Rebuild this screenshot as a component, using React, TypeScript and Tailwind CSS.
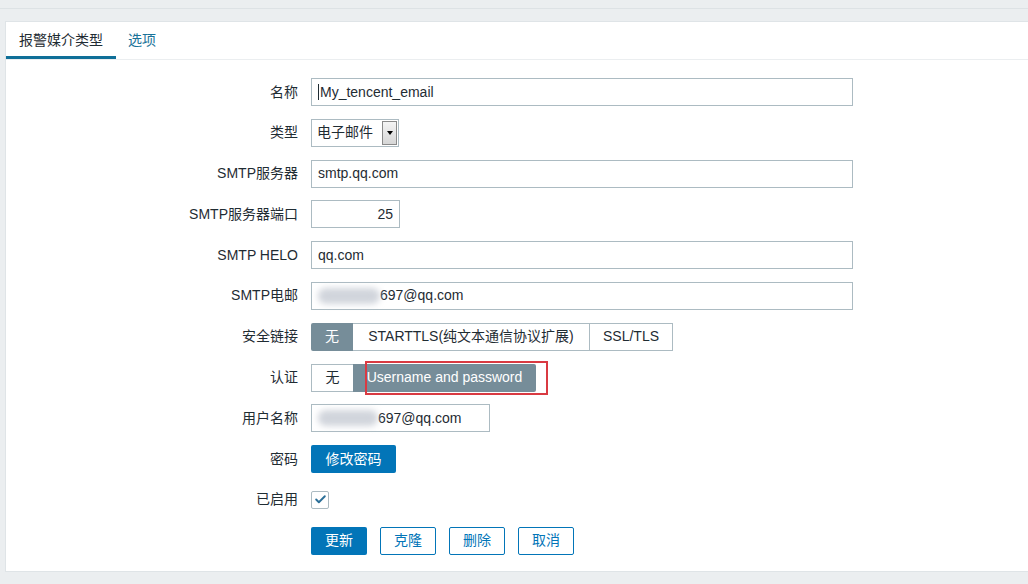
import { Check } from "lucide-react";

const font = { fontFamily: '"Liberation Sans", Arial, "Noto Sans CJK SC", sans-serif' };

function Blur({ w }: { w: string }) {
  return <span className={`inline-block h-4 ${w} rounded-full bg-gray-300 blur-[3px]`} />;
}

const Label = ({ children }: { children: React.ReactNode }) => (
  <div className="flex h-7 items-center justify-end text-[14px] text-[#1f2c33]">{children}</div>
);

const inputCls = "flex h-7 items-center border border-[#acbbc2] bg-white px-[6px] text-[14px] text-[#1f2c33]";

export default function App() {
  return (
    <div className="min-h-screen bg-[#ebeef0]" style={font}>
      <div className="h-[9px] border-b border-[#dde2e5]" />
      <div className="ml-[5px] mt-[12px] h-[551px] border border-r-0 border-[#dfe4e7] bg-white">
        <div className="flex h-[38px] border-b border-[#ebeef0]">
          <div className="flex w-[110px] items-center justify-center border-b-[3px] border-[#0f6f98] pt-[3px] text-[14px] text-[#1f2c33]">
            报警媒介类型
          </div>
          <div className="ml-[12px] flex items-center text-[14px] text-[#1a7399]">选项</div>
        </div>

        <div className="mt-[18px] grid grid-cols-[292px_1fr] gap-x-[13px] gap-y-[12.8px]">
          <Label>名称</Label>
          <div className={`${inputCls} w-[542px] border-[#2f545c] bg-[#fafeff]`}>
            <span className="mr-px h-4 w-px bg-[#1f2c33]" />My_tencent_email
          </div>

          <Label>类型</Label>
          <div className="flex h-7 w-[88px] items-center justify-between border border-[#acbbc2] bg-white pl-[5px] pr-px text-[14px] text-[#1f2c33]">
            电子邮件
            <span className="flex h-[24px] w-[15px] items-center justify-center border border-[#8a8a8a] bg-gradient-to-b from-[#f4f4f4] to-[#d6d6d6]">
              <span className="h-0 w-0 border-x-[3.5px] border-t-[4px] border-x-transparent border-t-black" />
            </span>
          </div>

          <Label>SMTP服务器</Label>
          <div className={`${inputCls} w-[542px]`}>smtp.qq.com</div>

          <Label>SMTP服务器端口</Label>
          <div className={`${inputCls} w-[89px] justify-end`}>25</div>

          <Label>SMTP HELO</Label>
          <div className={`${inputCls} w-[542px]`}>qq.com</div>

          <Label>SMTP电邮</Label>
          <div className={`${inputCls} w-[542px]`}>
            <Blur w="w-[62px]" />697@qq.com
          </div>

          <Label>安全链接</Label>
          <div className="flex h-7 text-[14px]">
            <div className="flex w-[42px] items-center justify-center rounded-l-[2px] bg-[#768d99] text-white">无</div>
            <div className="flex w-[237px] items-center justify-center border border-l-0 border-[#acbbc2] text-[#1f2c33]">
              STARTTLS(纯文本通信协议扩展)
            </div>
            <div className="flex w-[83px] items-center justify-center border border-l-0 border-[#acbbc2] text-[#1f2c33]">
              SSL/TLS
            </div>
          </div>

          <Label>认证</Label>
          <div className="flex h-7 text-[14px]">
            <div className="flex w-[42px] items-center justify-center border border-r-0 border-[#acbbc2] text-[#1f2c33]">无</div>
            <div className="relative flex w-[183px] items-center justify-center rounded-r-[2px] bg-[#768d99] text-white">
              Username and password
              <span className="absolute -bottom-[3px] -right-[12px] -top-[3px] left-[12px] border-2 border-[#d93a42]" />
            </div>
          </div>

          <Label>用户名称</Label>
          <div className={`${inputCls} w-[179px]`}>
            <Blur w="w-[60px]" />697@qq.com
          </div>

          <Label>密码</Label>
          <button className="flex h-7 w-[85px] items-center justify-center rounded-[2px] bg-[#0275b8] text-[14px] text-white">
            修改密码
          </button>

          <Label>已启用</Label>
          <div className="flex h-7 items-center">
            <span className="flex h-[18px] w-[18px] items-center justify-center rounded-[2px] border border-[#acbbc2] bg-white">
              <Check className="h-[13px] w-[13px] text-[#2b6f98]" strokeWidth={3.5} />
            </span>
          </div>

          <div />
          <div className="flex h-7 gap-[13px] text-[14px]">
            <button className="w-[56px] rounded-[2px] bg-[#0275b8] text-white">更新</button>
            <button className="w-[56px] rounded-[2px] border border-[#0275b8] bg-white text-[#0275b8]">克隆</button>
            <button className="w-[56px] rounded-[2px] border border-[#0275b8] bg-white text-[#0275b8]">删除</button>
            <button className="w-[56px] rounded-[2px] border border-[#0275b8] bg-white text-[#0275b8]">取消</button>
          </div>
        </div>
      </div>
    </div>
  );
}
